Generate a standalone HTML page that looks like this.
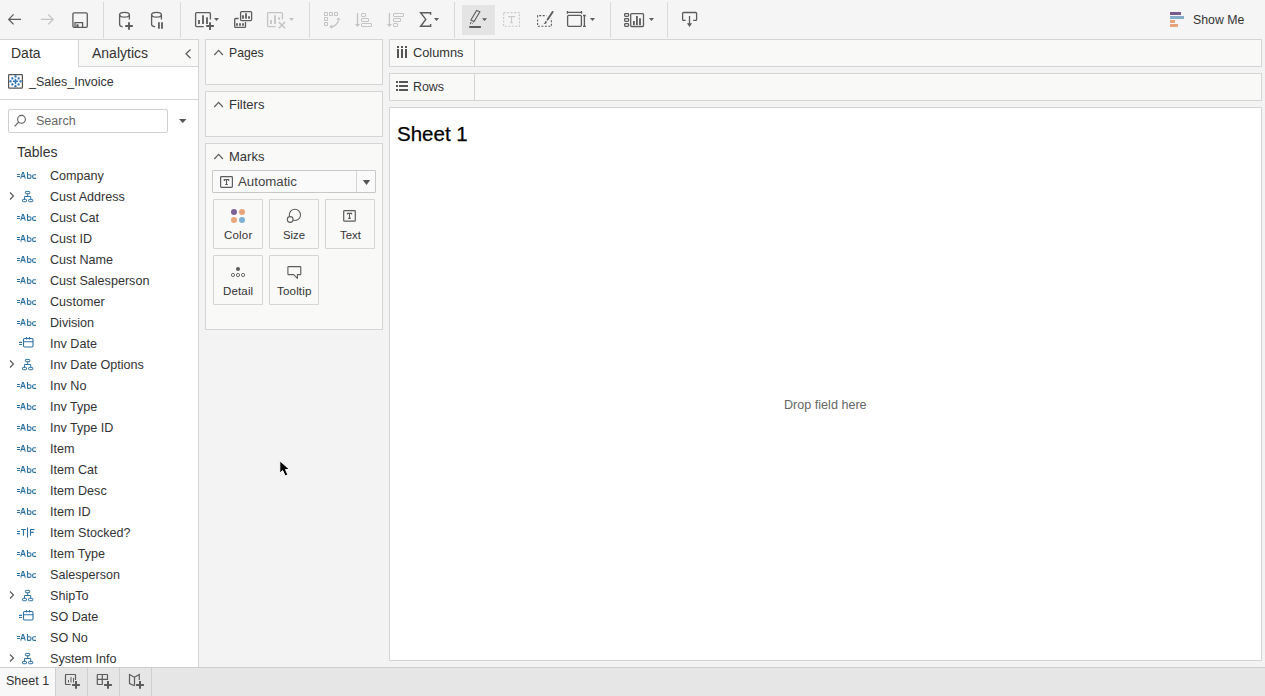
<!DOCTYPE html>
<html><head><meta charset="utf-8">
<style>
*{box-sizing:border-box;margin:0;padding:0}
html,body{width:1265px;height:696px;overflow:hidden;background:#f3f3f3;font-family:"Liberation Sans",sans-serif;color:#333}
.a{position:absolute}
.t{position:absolute;white-space:nowrap;line-height:1}
svg{position:absolute;overflow:visible}
#tb{left:0;top:0;width:1265px;height:39px;background:#f5f5f5}
.sep{position:absolute;top:2px;width:1px;height:36px;background:#d9d9d9}
.panel{position:absolute;background:#f9f9f8;border:1px solid #d5d5d5}
.card{position:absolute;width:50px;height:50px;background:#f9f9f8;border:1px solid #d5d5d5;border-radius:1px}
.fld{position:absolute;left:50px;font-size:12.6px;color:#333;white-space:nowrap;line-height:1}
</style></head><body>
<div id="tb" class="a"></div>
<div class="sep" style="left:103px"></div>
<div class="sep" style="left:180px"></div>
<div class="sep" style="left:309px"></div>
<div class="sep" style="left:454px"></div>
<div class="sep" style="left:610px"></div>
<div class="sep" style="left:667px"></div>
<div class="a" style="left:462px;top:5px;width:33px;height:30px;background:#e4e4e4"></div>

<!-- toolbar icons -->
<svg width="1265" height="39" style="left:0;top:0" fill="none" stroke="#5c5c5c" stroke-width="1.3">
<path d="M13.6,14.4L8.7,19.4L13.6,24.4M8.7,19.4H21"/>
<path d="M53.2,14.4L58.1,19.4L53.2,24.4M58.1,19.4H45.8" stroke="#c4c4c4" transform="translate(-5,0)"/>
<rect x="72.9" y="12.9" width="14.4" height="14.4" rx="1.2"/>
<path d="M75,27.3V22.6H82.6V27.3"/>
<rect x="76.4" y="24.3" width="2.2" height="3" fill="#5c5c5c" stroke="none"/>
<g id="cyl">
<ellipse cx="124.5" cy="14.8" rx="4.9" ry="2.4"/>
<path d="M119.6,14.8V24.6Q119.6,26.4 122.6,26.8M129.4,14.8V19.6"/>
</g>
<path d="M129,22.2V29.8M125.2,26H132.8" stroke-width="1.9"/>
<g transform="translate(32,0)">
<ellipse cx="124.5" cy="14.8" rx="4.9" ry="2.4"/>
<path d="M119.6,14.8V24.6Q119.6,26.4 123.2,26.8M129.4,14.8V19.6"/>
</g>
<path d="M158.9,22.2V28.8M162,22.2V28.8" stroke-width="1.8"/>
<path d="M203.7,26.6H196.6Q195.6,26.6 195.6,25.6V13.6Q195.6,12.6 196.6,12.6H209.4Q210.4,12.6 210.4,13.6V19.5"/>
<path d="M199,20V24M203,15.2V24M207,17.2V24" stroke-width="1.8"/>
<path d="M210,22.2V29.9M206.2,26H213.9" stroke-width="1.9"/>
<path d="M214,18H219L216.5,21Z" fill="#5c5c5c" stroke="none"/>
<rect x="240.6" y="11.6" width="11" height="9" rx="1"/>
<path d="M243,15.2V18.8M246,13.2V18.8M249,16.2V18.8" stroke-width="1.8"/>
<path d="M238.6,18.5H235.6Q234.7,18.5 234.7,19.4V26.5Q234.7,27.4 235.6,27.4H244.6Q245.5,27.4 245.5,26.5V22.1"/>
<path d="M237,23.2V25.8M240,23.2V25.8M243,23.2V25.8" stroke-width="1.8"/>
<g stroke="#c4c4c4">
<path d="M275.7,26.6H268.6Q267.6,26.6 267.6,25.6V13.6Q267.6,12.6 268.6,12.6H281.4Q282.4,12.6 282.4,13.6V19.6"/>
<path d="M271,20V24M275,15.2V24M279,17.2V19.8" stroke-width="1.8"/>
<path d="M278.8,22L285,28.2M285,22L278.8,28.2" stroke-width="1.6"/>
<path d="M289,18H294L291.5,21Z" fill="#c4c4c4" stroke="none"/>
<rect x="324.5" y="12.5" width="3" height="3" rx="0.4" stroke-width="1.05"/>
<rect x="329.5" y="12.5" width="3" height="3" rx="0.4" stroke-width="1.05"/>
<rect x="334.5" y="12.5" width="3" height="3" rx="0.4" stroke-width="1.05"/>
<rect x="324.5" y="17.5" width="3" height="3" rx="0.4" stroke-width="1.05"/>
<rect x="324.5" y="22.5" width="3" height="3" rx="0.4" stroke-width="1.05"/>
<path d="M331.5,27Q337,25.5 338.6,20.2"/>
<path d="M336.2,19.5L338.6,17.4L340.7,20Z M331.8,24.6L329.2,27.1L332.2,28.8Z" fill="#c4c4c4" stroke="none"/>
<path d="M357.5,12.9V25.5"/>
<path d="M354.9,24H360.1L357.5,26.9Z" fill="#c4c4c4" stroke="none"/>
<rect x="361.5" y="13.5" width="4" height="3" rx="0.5" stroke-width="1"/>
<rect x="361.5" y="18.5" width="7" height="3" rx="0.5" stroke-width="1"/>
<rect x="361.5" y="23.5" width="10" height="3" rx="0.5" stroke-width="1"/>
<path d="M389.4,12.9V25.5"/>
<path d="M386.8,24H392L389.4,26.9Z" fill="#c4c4c4" stroke="none"/>
<rect x="393.5" y="13.5" width="10" height="3" rx="0.5" stroke-width="1"/>
<rect x="393.5" y="18.5" width="7" height="3" rx="0.5" stroke-width="1"/>
<rect x="393.5" y="23.5" width="4" height="3" rx="0.5" stroke-width="1"/>
</g>
<path d="M430.6,14.8V12.8H420.6L425.8,19.4L420.6,26.2H430.6V24" stroke-width="1.4"/>
<path d="M434,18H439L436.5,21Z" fill="#5c5c5c" stroke="none"/>
<path d="M476.6,10.4L479.9,11.8L474,21.6L470.9,20Z" stroke-width="1.1"/>
<path d="M471.2,21.8L470.2,24.2M473.2,22.6L472.4,23.6" stroke-width="1"/>
<rect x="469.2" y="26" width="11.7" height="2" fill="#5c5c5c" stroke="none"/>
<path d="M482,18.3H487L484.5,21.1Z" fill="#5c5c5c" stroke="none"/>
<g stroke="#cacaca" stroke-width="1.1">
<rect x="503.6" y="12.6" width="15.8" height="13.6" stroke-dasharray="2,1.5"/>
<path d="M508,16.6H515M511.5,16.6V22.7M510,22.7H513"/>
</g>
<path d="M537.6,17.5V15.6H546.5M537.6,19.5V26.2H551.4V18.5" stroke-dasharray="2,1.5" stroke-width="1.1"/>
<path d="M552.6,11.9L547.6,19.6" stroke-width="1.9" stroke-linecap="round"/>
<path d="M545.6,20.8Q547.4,21.3 546.6,22.9Q545.6,24.2 543.6,24Q544.8,23 545.6,20.8Z" fill="#5c5c5c" stroke="none"/>
<path d="M567.4,12.3H581.5M567.4,11V13.7M581.5,11V13.7"/>
<rect x="567.6" y="15.3" width="13.8" height="11" rx="1.2"/>
<path d="M584.4,15.5V26.3M583,15.5H585.8M583,26.3H585.8"/>
<path d="M590,17.9H595L592.5,20.9Z" fill="#5c5c5c" stroke="none"/>
<rect x="624.6" y="13.6" width="4" height="2.8" rx="0.8"/>
<rect x="624.6" y="18.6" width="4" height="2.8" rx="0.8"/>
<rect x="624.6" y="23.6" width="4" height="2.8" rx="0.8"/>
<rect x="630.7" y="13.7" width="12.8" height="12.8" rx="0.9"/>
<path d="M633.9,21.1V24.9M636.9,16.1V24.9M640,18.2V24.9" stroke-width="1.8"/>
<path d="M649,18H654L651.5,21.1Z" fill="#5c5c5c" stroke="none"/>
<path d="M685.7,20.4H683.5Q682.6,20.4 682.6,19.5V13.4Q682.6,12.5 683.5,12.5H695.7Q696.6,12.5 696.6,13.4V19.5Q696.6,20.4 695.7,20.4H693.2"/>
<path d="M689.5,16V24"/>
<path d="M686.9,23.2H692.1L689.5,27Z" fill="#5c5c5c" stroke="none"/>
</svg>

<!-- left pane -->
<div class="a" style="left:0;top:39px;width:199px;height:628px;background:#fff;border-top:1px solid #d5d5d5;border-right:1px solid #d5d5d5"></div>
<div class="a" style="left:78px;top:40px;width:120px;height:27px;background:#f9f9f8;border-left:1px solid #d5d5d5;border-bottom:1px solid #d5d5d5"></div>
<div class="t" style="left:11px;top:46px;font-size:14px">Data</div>
<div class="t" style="left:92px;top:46px;font-size:14px">Analytics</div>
<div class="a" style="left:0;top:99px;width:198px;height:1px;background:#d6d6d6"></div>
<div class="t" style="left:29px;top:76px;font-size:12.5px">_Sales_Invoice</div>
<div class="a" style="left:8px;top:109px;width:160px;height:24px;border:1px solid #cfcfcf;border-radius:2px;background:#fff"></div>
<div class="t" style="left:36px;top:115px;font-size:12.5px;color:#666">Search</div>
<div class="t" style="left:17px;top:145px;font-size:14px">Tables</div>

<div id="fields">
<div class="fld" style="top:170px">Company</div>
<svg width="20" height="8" style="left:17px;top:172px" fill="none" stroke="#2e73a3" stroke-width="1.1"><path d="M0,2.5H3M0,4.5H3"/><path d="M3.7,6.6L5.6,0.6H6.4L8.3,6.6M4.6,4.4H7.4"/><path d="M10.5,0V6.4M10.5,2.7H12.6Q14,2.7 14,4.1V5Q14,6.4 12.6,6.4H10.5"/><path d="M19,2.7H17Q15.6,2.7 15.6,4.1V5Q15.6,6.4 17,6.4H19"/></svg>
<div class="fld" style="top:191px">Cust Address</div>
<svg width="6" height="9" style="left:9px;top:192px" fill="none" stroke="#555" stroke-width="1.1"><path d="M1,0.5L4.5,4L1,7.5"/></svg>
<svg width="12" height="12" style="left:22px;top:179px;top:190px" fill="none" stroke="#2e73a3" stroke-width="1"><rect x="3.4" y="1.4" width="4.4" height="2.3" rx="0.7"/><path d="M5.7,3.7V6.5M2.5,9.4V6.5H8.7V9.4"/><rect x="0.5" y="9.4" width="4" height="2.3" rx="0.7"/><rect x="6.6" y="9.4" width="4.2" height="2.3" rx="0.7"/></svg>
<div class="fld" style="top:212px">Cust Cat</div>
<svg width="20" height="8" style="left:17px;top:214px" fill="none" stroke="#2e73a3" stroke-width="1.1"><path d="M0,2.5H3M0,4.5H3"/><path d="M3.7,6.6L5.6,0.6H6.4L8.3,6.6M4.6,4.4H7.4"/><path d="M10.5,0V6.4M10.5,2.7H12.6Q14,2.7 14,4.1V5Q14,6.4 12.6,6.4H10.5"/><path d="M19,2.7H17Q15.6,2.7 15.6,4.1V5Q15.6,6.4 17,6.4H19"/></svg>
<div class="fld" style="top:233px">Cust ID</div>
<svg width="20" height="8" style="left:17px;top:235px" fill="none" stroke="#2e73a3" stroke-width="1.1"><path d="M0,2.5H3M0,4.5H3"/><path d="M3.7,6.6L5.6,0.6H6.4L8.3,6.6M4.6,4.4H7.4"/><path d="M10.5,0V6.4M10.5,2.7H12.6Q14,2.7 14,4.1V5Q14,6.4 12.6,6.4H10.5"/><path d="M19,2.7H17Q15.6,2.7 15.6,4.1V5Q15.6,6.4 17,6.4H19"/></svg>
<div class="fld" style="top:254px">Cust Name</div>
<svg width="20" height="8" style="left:17px;top:256px" fill="none" stroke="#2e73a3" stroke-width="1.1"><path d="M0,2.5H3M0,4.5H3"/><path d="M3.7,6.6L5.6,0.6H6.4L8.3,6.6M4.6,4.4H7.4"/><path d="M10.5,0V6.4M10.5,2.7H12.6Q14,2.7 14,4.1V5Q14,6.4 12.6,6.4H10.5"/><path d="M19,2.7H17Q15.6,2.7 15.6,4.1V5Q15.6,6.4 17,6.4H19"/></svg>
<div class="fld" style="top:275px">Cust Salesperson</div>
<svg width="20" height="8" style="left:17px;top:277px" fill="none" stroke="#2e73a3" stroke-width="1.1"><path d="M0,2.5H3M0,4.5H3"/><path d="M3.7,6.6L5.6,0.6H6.4L8.3,6.6M4.6,4.4H7.4"/><path d="M10.5,0V6.4M10.5,2.7H12.6Q14,2.7 14,4.1V5Q14,6.4 12.6,6.4H10.5"/><path d="M19,2.7H17Q15.6,2.7 15.6,4.1V5Q15.6,6.4 17,6.4H19"/></svg>
<div class="fld" style="top:296px">Customer</div>
<svg width="20" height="8" style="left:17px;top:298px" fill="none" stroke="#2e73a3" stroke-width="1.1"><path d="M0,2.5H3M0,4.5H3"/><path d="M3.7,6.6L5.6,0.6H6.4L8.3,6.6M4.6,4.4H7.4"/><path d="M10.5,0V6.4M10.5,2.7H12.6Q14,2.7 14,4.1V5Q14,6.4 12.6,6.4H10.5"/><path d="M19,2.7H17Q15.6,2.7 15.6,4.1V5Q15.6,6.4 17,6.4H19"/></svg>
<div class="fld" style="top:317px">Division</div>
<svg width="20" height="8" style="left:17px;top:319px" fill="none" stroke="#2e73a3" stroke-width="1.1"><path d="M0,2.5H3M0,4.5H3"/><path d="M3.7,6.6L5.6,0.6H6.4L8.3,6.6M4.6,4.4H7.4"/><path d="M10.5,0V6.4M10.5,2.7H12.6Q14,2.7 14,4.1V5Q14,6.4 12.6,6.4H10.5"/><path d="M19,2.7H17Q15.6,2.7 15.6,4.1V5Q15.6,6.4 17,6.4H19"/></svg>
<div class="fld" style="top:338px">Inv Date</div>
<svg width="16" height="11" style="left:18px;top:337px" fill="none" stroke="#2e73a3" stroke-width="1.1"><path d="M1,5.4H4M1,7.5H4"/><rect x="5.5" y="1.5" width="9.5" height="8.5" rx="1.2"/><path d="M5.5,4.7H15M8.5,0V2.5M11.5,0V2.5"/></svg>
<div class="fld" style="top:359px">Inv Date Options</div>
<svg width="6" height="9" style="left:9px;top:360px" fill="none" stroke="#555" stroke-width="1.1"><path d="M1,0.5L4.5,4L1,7.5"/></svg>
<svg width="12" height="12" style="left:22px;top:347px;top:358px" fill="none" stroke="#2e73a3" stroke-width="1"><rect x="3.4" y="1.4" width="4.4" height="2.3" rx="0.7"/><path d="M5.7,3.7V6.5M2.5,9.4V6.5H8.7V9.4"/><rect x="0.5" y="9.4" width="4" height="2.3" rx="0.7"/><rect x="6.6" y="9.4" width="4.2" height="2.3" rx="0.7"/></svg>
<div class="fld" style="top:380px">Inv No</div>
<svg width="20" height="8" style="left:17px;top:382px" fill="none" stroke="#2e73a3" stroke-width="1.1"><path d="M0,2.5H3M0,4.5H3"/><path d="M3.7,6.6L5.6,0.6H6.4L8.3,6.6M4.6,4.4H7.4"/><path d="M10.5,0V6.4M10.5,2.7H12.6Q14,2.7 14,4.1V5Q14,6.4 12.6,6.4H10.5"/><path d="M19,2.7H17Q15.6,2.7 15.6,4.1V5Q15.6,6.4 17,6.4H19"/></svg>
<div class="fld" style="top:401px">Inv Type</div>
<svg width="20" height="8" style="left:17px;top:403px" fill="none" stroke="#2e73a3" stroke-width="1.1"><path d="M0,2.5H3M0,4.5H3"/><path d="M3.7,6.6L5.6,0.6H6.4L8.3,6.6M4.6,4.4H7.4"/><path d="M10.5,0V6.4M10.5,2.7H12.6Q14,2.7 14,4.1V5Q14,6.4 12.6,6.4H10.5"/><path d="M19,2.7H17Q15.6,2.7 15.6,4.1V5Q15.6,6.4 17,6.4H19"/></svg>
<div class="fld" style="top:422px">Inv Type ID</div>
<svg width="20" height="8" style="left:17px;top:424px" fill="none" stroke="#2e73a3" stroke-width="1.1"><path d="M0,2.5H3M0,4.5H3"/><path d="M3.7,6.6L5.6,0.6H6.4L8.3,6.6M4.6,4.4H7.4"/><path d="M10.5,0V6.4M10.5,2.7H12.6Q14,2.7 14,4.1V5Q14,6.4 12.6,6.4H10.5"/><path d="M19,2.7H17Q15.6,2.7 15.6,4.1V5Q15.6,6.4 17,6.4H19"/></svg>
<div class="fld" style="top:443px">Item</div>
<svg width="20" height="8" style="left:17px;top:445px" fill="none" stroke="#2e73a3" stroke-width="1.1"><path d="M0,2.5H3M0,4.5H3"/><path d="M3.7,6.6L5.6,0.6H6.4L8.3,6.6M4.6,4.4H7.4"/><path d="M10.5,0V6.4M10.5,2.7H12.6Q14,2.7 14,4.1V5Q14,6.4 12.6,6.4H10.5"/><path d="M19,2.7H17Q15.6,2.7 15.6,4.1V5Q15.6,6.4 17,6.4H19"/></svg>
<div class="fld" style="top:464px">Item Cat</div>
<svg width="20" height="8" style="left:17px;top:466px" fill="none" stroke="#2e73a3" stroke-width="1.1"><path d="M0,2.5H3M0,4.5H3"/><path d="M3.7,6.6L5.6,0.6H6.4L8.3,6.6M4.6,4.4H7.4"/><path d="M10.5,0V6.4M10.5,2.7H12.6Q14,2.7 14,4.1V5Q14,6.4 12.6,6.4H10.5"/><path d="M19,2.7H17Q15.6,2.7 15.6,4.1V5Q15.6,6.4 17,6.4H19"/></svg>
<div class="fld" style="top:485px">Item Desc</div>
<svg width="20" height="8" style="left:17px;top:487px" fill="none" stroke="#2e73a3" stroke-width="1.1"><path d="M0,2.5H3M0,4.5H3"/><path d="M3.7,6.6L5.6,0.6H6.4L8.3,6.6M4.6,4.4H7.4"/><path d="M10.5,0V6.4M10.5,2.7H12.6Q14,2.7 14,4.1V5Q14,6.4 12.6,6.4H10.5"/><path d="M19,2.7H17Q15.6,2.7 15.6,4.1V5Q15.6,6.4 17,6.4H19"/></svg>
<div class="fld" style="top:506px">Item ID</div>
<svg width="20" height="8" style="left:17px;top:508px" fill="none" stroke="#2e73a3" stroke-width="1.1"><path d="M0,2.5H3M0,4.5H3"/><path d="M3.7,6.6L5.6,0.6H6.4L8.3,6.6M4.6,4.4H7.4"/><path d="M10.5,0V6.4M10.5,2.7H12.6Q14,2.7 14,4.1V5Q14,6.4 12.6,6.4H10.5"/><path d="M19,2.7H17Q15.6,2.7 15.6,4.1V5Q15.6,6.4 17,6.4H19"/></svg>
<div class="fld" style="top:527px">Item Stocked?</div>
<svg width="20" height="12" style="left:17px;top:529px" fill="none" stroke="#2e73a3" stroke-width="1.1"><path d="M0,2.5H3M0,4.6H3"/><path d="M4,0.5H9M6.5,0.5V6.8"/><path d="M10.5,-1.6V8.6"/><path d="M13.5,6.8V0.5H17.5M13.5,3.4H16.7"/></svg>
<div class="fld" style="top:548px">Item Type</div>
<svg width="20" height="8" style="left:17px;top:550px" fill="none" stroke="#2e73a3" stroke-width="1.1"><path d="M0,2.5H3M0,4.5H3"/><path d="M3.7,6.6L5.6,0.6H6.4L8.3,6.6M4.6,4.4H7.4"/><path d="M10.5,0V6.4M10.5,2.7H12.6Q14,2.7 14,4.1V5Q14,6.4 12.6,6.4H10.5"/><path d="M19,2.7H17Q15.6,2.7 15.6,4.1V5Q15.6,6.4 17,6.4H19"/></svg>
<div class="fld" style="top:569px">Salesperson</div>
<svg width="20" height="8" style="left:17px;top:571px" fill="none" stroke="#2e73a3" stroke-width="1.1"><path d="M0,2.5H3M0,4.5H3"/><path d="M3.7,6.6L5.6,0.6H6.4L8.3,6.6M4.6,4.4H7.4"/><path d="M10.5,0V6.4M10.5,2.7H12.6Q14,2.7 14,4.1V5Q14,6.4 12.6,6.4H10.5"/><path d="M19,2.7H17Q15.6,2.7 15.6,4.1V5Q15.6,6.4 17,6.4H19"/></svg>
<div class="fld" style="top:590px">ShipTo</div>
<svg width="6" height="9" style="left:9px;top:591px" fill="none" stroke="#555" stroke-width="1.1"><path d="M1,0.5L4.5,4L1,7.5"/></svg>
<svg width="12" height="12" style="left:22px;top:578px;top:589px" fill="none" stroke="#2e73a3" stroke-width="1"><rect x="3.4" y="1.4" width="4.4" height="2.3" rx="0.7"/><path d="M5.7,3.7V6.5M2.5,9.4V6.5H8.7V9.4"/><rect x="0.5" y="9.4" width="4" height="2.3" rx="0.7"/><rect x="6.6" y="9.4" width="4.2" height="2.3" rx="0.7"/></svg>
<div class="fld" style="top:611px">SO Date</div>
<svg width="16" height="11" style="left:18px;top:610px" fill="none" stroke="#2e73a3" stroke-width="1.1"><path d="M1,5.4H4M1,7.5H4"/><rect x="5.5" y="1.5" width="9.5" height="8.5" rx="1.2"/><path d="M5.5,4.7H15M8.5,0V2.5M11.5,0V2.5"/></svg>
<div class="fld" style="top:632px">SO No</div>
<svg width="20" height="8" style="left:17px;top:634px" fill="none" stroke="#2e73a3" stroke-width="1.1"><path d="M0,2.5H3M0,4.5H3"/><path d="M3.7,6.6L5.6,0.6H6.4L8.3,6.6M4.6,4.4H7.4"/><path d="M10.5,0V6.4M10.5,2.7H12.6Q14,2.7 14,4.1V5Q14,6.4 12.6,6.4H10.5"/><path d="M19,2.7H17Q15.6,2.7 15.6,4.1V5Q15.6,6.4 17,6.4H19"/></svg>
<div class="fld" style="top:653px">System Info</div>
<svg width="6" height="9" style="left:9px;top:654px" fill="none" stroke="#555" stroke-width="1.1"><path d="M1,0.5L4.5,4L1,7.5"/></svg>
<svg width="12" height="12" style="left:22px;top:641px;top:652px" fill="none" stroke="#2e73a3" stroke-width="1"><rect x="3.4" y="1.4" width="4.4" height="2.3" rx="0.7"/><path d="M5.7,3.7V6.5M2.5,9.4V6.5H8.7V9.4"/><rect x="0.5" y="9.4" width="4" height="2.3" rx="0.7"/><rect x="6.6" y="9.4" width="4.2" height="2.3" rx="0.7"/></svg>
</div>

<!-- center panels -->
<div class="panel" style="left:205px;top:39px;width:178px;height:46px"></div>
<div class="t" style="left:229px;top:47px;font-size:12.2px">Pages</div>
<div class="panel" style="left:205px;top:91px;width:178px;height:46px"></div>
<div class="t" style="left:229px;top:98px;font-size:13px">Filters</div>
<div class="panel" style="left:205px;top:143px;width:178px;height:187px"></div>
<div class="t" style="left:229px;top:150px;font-size:13px">Marks</div>
<div class="a" style="left:212px;top:170px;width:164px;height:23px;background:#fafafa;border:1px solid #c8c8c8;border-radius:1px"></div>
<div class="a" style="left:356px;top:171px;width:1px;height:21px;background:#d5d5d5"></div>
<div class="t" style="left:238px;top:175px;font-size:13.25px;color:#444">Automatic</div>
<div class="card" style="left:213px;top:199px"></div>
<div class="card" style="left:269px;top:199px"></div>
<div class="card" style="left:325px;top:199px"></div>
<div class="card" style="left:213px;top:255px"></div>
<div class="card" style="left:269px;top:255px"></div>
<div class="t" style="left:224px;top:230px;font-size:11.5px;letter-spacing:0.2px">Color</div>
<div class="t" style="left:283px;top:230px;font-size:11.3px">Size</div>
<div class="t" style="left:340px;top:230px;font-size:11.4px">Text</div>
<div class="t" style="left:223px;top:286px;font-size:11.5px;letter-spacing:0.15px">Detail</div>
<div class="t" style="left:277px;top:285px;font-size:11.6px;letter-spacing:0.15px">Tooltip</div>

<!-- shelves -->
<div class="panel" style="left:389px;top:39px;width:873px;height:28px"></div>
<div class="a" style="left:474px;top:40px;width:1px;height:26px;background:#d5d5d5"></div>
<div class="t" style="left:413px;top:47px;font-size:12.8px">Columns</div>
<div class="panel" style="left:389px;top:73px;width:873px;height:28px"></div>
<div class="a" style="left:474px;top:74px;width:1px;height:26px;background:#d5d5d5"></div>
<div class="t" style="left:413px;top:81px;font-size:12.4px">Rows</div>

<!-- canvas -->
<div class="a" style="left:389px;top:107px;width:873px;height:554px;background:#fff;border:1px solid #d5d5d5"></div>
<div class="t" style="left:397px;top:124px;font-size:20.5px;color:#000;-webkit-text-stroke:0.25px #000">Sheet 1</div>
<div class="t" style="left:784px;top:399px;font-size:12.6px;color:#666">Drop field here</div>

<!-- bottom bar -->
<div class="a" style="left:0;top:667px;width:1265px;height:29px;background:#e6e6e6;border-top:1px solid #cdcdcd"></div>
<div class="a" style="left:0;top:668px;width:55px;height:28px;background:#f8f8f8"></div>
<div class="a" style="left:55px;top:668px;width:1px;height:28px;background:#d0d0d0"></div>
<div class="a" style="left:87px;top:668px;width:1px;height:28px;background:#d0d0d0"></div>
<div class="a" style="left:119px;top:668px;width:1px;height:28px;background:#d0d0d0"></div>
<div class="a" style="left:151px;top:668px;width:1px;height:28px;background:#d0d0d0"></div>
<div class="t" style="left:6px;top:675px;font-size:12.5px">Sheet 1</div>

<!-- show me -->
<div class="a" style="left:1170px;top:12px;width:11px;height:3px;background:#7b5a8c"></div>
<div class="a" style="left:1170px;top:16px;width:14px;height:3px;background:#86aec9"></div>
<div class="a" style="left:1170px;top:20px;width:5px;height:3px;background:#e8a47a"></div>
<div class="a" style="left:1170px;top:24px;width:8px;height:3px;background:#e8a47a"></div>
<div class="t" style="left:1193px;top:14px;font-size:12.3px">Show Me</div>
<!-- page icons -->
<svg width="1265" height="696" style="left:0;top:0" fill="none" stroke="#5c5c5c" stroke-width="1.2">
<!-- collapse chevron -->
<path d="M190.5,49.5L186,53.8L190.5,58.2"/>
<!-- datasource icon -->
<rect x="8.6" y="74.6" width="13.8" height="13.6" rx="0.8" stroke="#555"/>
<g stroke="#2f74b5">
<path d="M15.5,78.7V83.9M12.9,81.3H18.1" stroke-width="1.5"/>
<path d="M15.5,75.3V77.5M14.4,76.4H16.6M15.5,85.1V87.3M14.4,86.2H16.6M10.5,80.2V82.4M9.4,81.3H11.6M20.5,80.2V82.4M19.4,81.3H21.6M12.4,77.3V79.5M11.3,78.4H13.5M18.6,77.3V79.5M17.5,78.4H19.7M12.4,83.3V85.5M11.3,84.4H13.5M18.6,83.3V85.5M17.5,84.4H19.7" stroke-width="1.5"/>
</g>
<!-- magnifier -->
<circle cx="21.5" cy="119.3" r="3.9" stroke-width="1.1"/>
<path d="M18.6,122.2L14.6,126.3" stroke-width="1.2"/>
<path d="M179,119H186.5L182.75,123Z" fill="#555" stroke="none"/>
<!-- carets -->
<path d="M214.3,55L218.6,50.4L222.9,55"/>
<path d="M214.3,107L218.6,102.4L222.9,107"/>
<path d="M214.3,159L218.6,154.4L222.9,159"/>
<!-- marks dropdown -->
<rect x="220.6" y="176.6" width="11.8" height="10.8" rx="0.8"/>
<path d="M224.3,181V179.6H228.7V181M226.5,179.6V184.5M225.2,184.5H227.8" stroke-width="1.1"/>
<path d="M362.8,180H370.2L366.5,185Z" fill="#555" stroke="none"/>
<!-- color dots -->
<g stroke="none">
<circle cx="234" cy="212" r="3" fill="#7d6196"/>
<circle cx="242" cy="212" r="3" fill="#e9a57c"/>
<circle cx="234" cy="220" r="3" fill="#e9a57c"/>
<circle cx="242" cy="220" r="3" fill="#7fb1d3"/>
</g>
<!-- size -->
<circle cx="294.9" cy="214.9" r="5.6" stroke-width="1.1"/>
<circle cx="290.2" cy="219.5" r="2.9" stroke-width="1.1" fill="#f9f9f8"/>
<!-- text card -->
<rect x="343.7" y="210.6" width="11.6" height="10.6" rx="0.8"/>
<path d="M347.4,214.6V213.4H351.6V214.6M349.5,213.4V218.4M348.2,218.4H350.8" stroke-width="1.1"/>
<!-- detail -->
<circle cx="238" cy="268.9" r="2" fill="#5c5c5c" stroke="none"/>
<circle cx="233" cy="275" r="1.6" stroke-width="0.9"/>
<circle cx="238" cy="275" r="1.6" stroke-width="0.9"/>
<circle cx="243.1" cy="275" r="1.6" stroke-width="0.9"/>
<!-- tooltip -->
<path d="M293.7,274.6H288.6Q287.9,274.6 287.9,273.9V267.3Q287.9,266.6 288.6,266.6H300.1Q300.8,266.6 300.8,267.3V273.9Q300.8,274.6 300.1,274.6H297.4V278.4Z" stroke-width="1.1" stroke-linejoin="round"/>
<!-- columns icon -->
<g fill="#555" stroke="none">
<rect x="397" y="46" width="2" height="2"/><rect x="401" y="46" width="2" height="2"/><rect x="405" y="46" width="2" height="2"/>
<rect x="397" y="49" width="2" height="9"/><rect x="401" y="49" width="2" height="9"/><rect x="405" y="49" width="2" height="9"/>
<rect x="396" y="81" width="2" height="2"/><rect x="396" y="85" width="2" height="2"/><rect x="396" y="89" width="2" height="2"/>
<rect x="399" y="81" width="9" height="2"/><rect x="399" y="85" width="9" height="2"/><rect x="399" y="89" width="9" height="2"/>
</g>
<!-- bottom icons -->
<path d="M70.7,684.5H66Q65.5,684.5 65.5,684V675Q65.5,674.5 66,674.5H75Q75.5,674.5 75.5,675V680"/>
<path d="M68.5,680V682.5M71,677V682.5M73.5,678V682.5" stroke-width="1"/>
<path d="M76,681V688.8M72.1,685H79.9" stroke-width="2"/>
<path d="M102.7,684.5H97.8Q97.3,684.5 97.3,684V675Q97.3,674.5 97.8,674.5H107Q107.5,674.5 107.5,675V680M102.3,674.5V684.5M97.3,679.3H107.5"/>
<path d="M108,681V688.8M104.1,685H111.9" stroke-width="2"/>
<path d="M134.5,685.8L129.5,683.5V674.5L134.5,677.3V685.8M134.5,677.3L139.3,674.5V680"/>
<path d="M140,681V688.8M136.1,685H143.9" stroke-width="2"/>
<!-- cursor -->
<path d="M279.8,460.7V473.2L282.7,470.6L285.1,476L287.9,474.8L285.5,469.6H289.6Z" fill="#000" stroke="#fff" stroke-width="1" stroke-linejoin="miter"/>
</svg>

</body></html>
